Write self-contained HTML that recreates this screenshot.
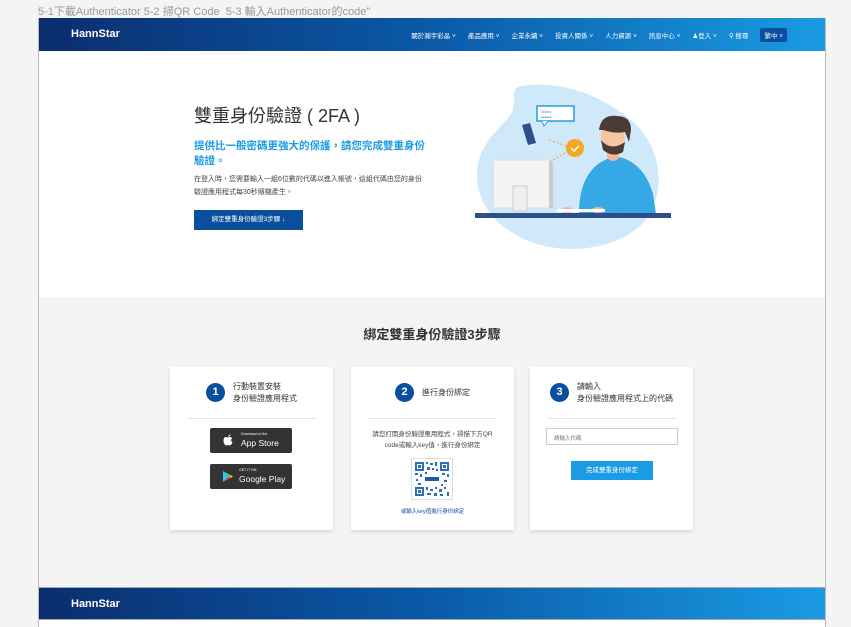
<!DOCTYPE html>
<html><head><meta charset="utf-8"><style>
*{box-sizing:border-box;margin:0;padding:0}
body{width:851px;height:627px;overflow:hidden;background:#f4f4f4;font-family:"Liberation Sans","Noto Sans CJK TC",sans-serif;position:relative}
.cap{position:absolute;left:38px;top:3px;font-size:11px;color:#999}
.frame{position:absolute;left:38px;top:18px;width:788px;height:609px;border-left:1px solid #bbb;border-right:1px solid #bbb;background:#fff}
.hdr{height:33px;background:linear-gradient(90deg,#0b2d6e,#0a5aa8 50%,#1a9be3);position:relative}
.logo{position:absolute;left:32px;top:10px;color:#fff;font-weight:bold;font-size:11px}
.nav{position:absolute;right:38px;top:0;height:33px;display:flex;align-items:center;gap:12px;font-size:6.5px;color:#fff}
.nav .lang{background:#0a4f9e;padding:2px 4px;border-radius:1px}
.hero{position:relative;height:246px;background:#fff}
.h1{position:absolute;left:155px;top:51px;font-size:18px;color:#333}
.sub{position:absolute;left:155px;top:88px;width:232px;font-size:10.5px;line-height:15px;color:#1a9be3;font-weight:bold}
.desc{position:absolute;left:155px;top:122px;width:232px;font-size:7px;line-height:13px;color:#444}
.btn1{position:absolute;left:155px;top:159px;width:109px;height:20px;background:#0a4f9e;color:#fff;font-size:6.5px;text-align:center;line-height:20px}
.gray{position:absolute;left:0;top:279px;width:786px;height:290px;background:#f4f4f4}
.stitle{position:absolute;top:27px;width:100%;text-align:center;font-size:13px;color:#333;font-weight:bold}
.card{position:absolute;top:70px;width:163px;height:163px;background:#fff;box-shadow:0 2px 4px rgba(0,0,0,.12)}
.chead{position:absolute;left:17px;right:17px;top:0;height:52px;border-bottom:1px solid #e6e6e6;display:flex;align-items:center;justify-content:center;gap:8px;font-size:8px;color:#333;line-height:12px;white-space:nowrap}
.num{width:19px;height:19px;border-radius:50%;background:#0a4f9e;color:#fff;font-weight:bold;font-size:11px;text-align:center;line-height:19px;flex:none}
.store{position:absolute;left:40px;width:82px;height:25px;background:#333;border-radius:2px;color:#fff;font-size:8.5px}
.foot{position:absolute;left:0;top:569px;width:786px;height:33px;background:linear-gradient(90deg,#0b2d6e,#0a5aa8 50%,#1a9be3);border-top:1px solid #9ab;border-bottom:1px solid #9ab}
</style></head><body>
<div class="cap">5-1下載Authenticator 5-2 掃QR Code&nbsp; 5-3 輸入Authenticator的code"</div>
<div class="frame">
<div class="hdr"><div class="logo">HannStar</div>
<div class="nav"><span>關於瀚宇彩晶 ˅</span><span>產品應用 ˅</span><span>企業永續 ˅</span><span>投資人關係 ˅</span><span>人力資源 ˅</span><span>訊息中心 ˅</span><span>♟登入 ˅</span><span>⚲ 搜尋</span><span class="lang">繁中 ˅</span></div></div>
<div class="hero">
<div class="h1">雙重身份驗證 ( 2FA )</div>
<div class="sub">提供比一般密碼更強大的保護，請您完成雙重身份驗證。</div>
<div class="desc">在登入時，您需要輸入一組6位數的代碼以進入帳號，這組代碼由您的身份驗證應用程式每30秒隨機產生。</div>
<div class="btn1">綁定雙重身份驗證3步驟 ↓</div>
<svg style="position:absolute;left:422px;top:29px" width="222" height="172" viewBox="460 80 222 172">
<path d="M520 86 C560 80 600 95 630 120 C665 150 665 200 640 225 C610 252 560 255 525 240 C485 222 470 190 478 160 C485 135 505 125 512 110 C515 95 510 88 520 86Z" fill="#cfe9fa"/>
<rect x="536" y="106" width="37" height="15" fill="#fff" stroke="#2a9be0" stroke-width="1.5"/>
<path d="M541 121 l2 5 l4 -5" fill="#fff" stroke="#2a9be0"/>
<text x="540" y="113" font-size="4" fill="#2a9be0">30sec</text>
<text x="540" y="119" font-size="5" fill="#2a9be0">••••••</text>
<path d="M521 125 l8 -2 l6 20 l-8 2z" fill="#2d4f8c"/>
<path d="M548 140 l17 6 M552 160 l14 -8" stroke="#f5a623" stroke-dasharray="2 2"/>
<circle cx="574" cy="148" r="9" fill="#f5a623"/><path d="M570 148 l3 3 l5 -5" stroke="#fff" fill="none" stroke-width="1.5"/>
<path d="M492 160 h56 a4 4 0 0 1 4 4 v44 h-60z" fill="#f4f4f4" stroke="#ddd"/>
<path d="M548 160 a4 4 0 0 1 4 4 v44 h-4z" fill="#ccc"/>
<rect x="512" y="186" width="14" height="25" fill="#f0f0f0" stroke="#ccc"/>
<path d="M578 214 q0 -38 22 -52 l12 -6 l10 2 q22 8 30 36 l3 20z" fill="#35a8e6"/>
<path d="M606 146 l0 12 q6 6 12 0 l0 -12z" fill="#f2b896"/>
<path d="M600 124 q10 -8 22 0 l2 16 q-2 10 -12 12 q-10 -2 -12 -12z" fill="#f6c6a3"/>
<path d="M598 130 q2 -16 18 -14 q14 0 14 14 l-2 12 l-4 -10 q-10 2 -22 -2z" fill="#4a3b36"/>
<path d="M600 140 q10 12 24 2 l-2 10 q-10 6 -20 -2z" fill="#4a3b36"/>
<path d="M590 200 q10 6 30 4 l4 8 h-34z" fill="#35a8e6"/>
<ellipse cx="566" cy="210" rx="6" ry="3" fill="#f2b896"/><ellipse cx="597" cy="210" rx="6" ry="3" fill="#f2b896"/>
<rect x="474" y="213" width="196" height="5" fill="#2d4f8c"/>
<rect x="556" y="209" width="48" height="3" fill="#fff"/>
</svg>
</div>
<div class="gray">
<div class="stitle">綁定雙重身份驗證3步驟</div>
<div class="card" style="left:131px"><div class="chead"><div class="num">1</div><div>行動裝置安裝<br>身份驗證應用程式</div></div>
<div class="store" style="top:61px"><svg style="position:absolute;left:13px;top:6px" width="10" height="12" viewBox="0 0 10 12"><path d="M5 3 C6 1 7 0.5 7.5 0.3 C7.6 1.5 6.8 2.6 5 3Z M5 3.5 C3 2.5 0.5 3 0.5 6.5 C0.5 9 2 11.5 3.2 11.5 C4 11.5 4.2 11 5 11 C5.8 11 6 11.5 6.8 11.5 C8 11.5 9 9.5 9.5 8.3 C8 7.6 7.6 5 9.2 4.2 C8 2.6 6 3 5 3.5Z" fill="#fff"/></svg><span style="position:absolute;left:31px;top:4px;font-size:3.5px">Download on the</span><span style="position:absolute;left:31px;top:10px">App Store</span></div>
<div class="store" style="top:97px"><svg style="position:absolute;left:13px;top:7px" width="10" height="11" viewBox="0 0 10 11"><path d="M0 0 L6 5.5 L0 11Z" fill="#2dc8f0"/><path d="M0 0 L8 4.3 L6 5.5Z" fill="#3bd16f"/><path d="M0 11 L8 6.7 L6 5.5Z" fill="#f0435a"/><path d="M8 4.3 L10 5.5 L8 6.7 L6 5.5Z" fill="#ffd400"/></svg><span style="position:absolute;left:29px;top:4px;font-size:3.5px">GET IT ON</span><span style="position:absolute;left:29px;top:10px">Google Play</span></div></div>
<div class="card" style="left:312px"><div class="chead"><div class="num">2</div><div>進行身份綁定</div></div>
<div style="position:absolute;top:62px;width:100%;text-align:center;font-size:6.5px;line-height:11px;color:#444;padding:0 14px">請您打開身份驗證應用程式，掃描下方QR code或輸入key值，進行身份綁定</div>
<svg style="position:absolute;left:61px;top:92px;outline:1px solid #ddd" width="40" height="40" viewBox="0 0 40 40"><rect width="40" height="40" fill="#fff"/>
<g fill="#2c6fb3"><rect x="3" y="3" width="9" height="9"/><rect x="28" y="3" width="9" height="9"/><rect x="3" y="28" width="9" height="9"/>
<path d="M14 3h2v2h-2zM18 4h3v2h-3zM23 3h2v4h-2zM15 8h3v3h-3zM20 9h2v2h-2zM24 10h2v2h-2zM3 14h3v2h-3zM8 15h2v3h-2zM13 13h2v2h-2zM30 14h3v2h-3zM35 15h2v3h-2zM4 20h2v2h-2zM32 21h3v2h-3zM14 28h2v3h-2zM18 30h3v2h-3zM23 28h2v2h-2zM27 30h3v3h-3zM32 28h2v2h-2zM35 33h2v4h-2zM15 34h4v2h-4zM22 34h3v3h-3zM28 35h3v2h-3zM6 24h3v2h-3zM29 25h2v2h-2z"/></g>
<rect x="5" y="5" width="5" height="5" fill="#fff"/><rect x="30" y="5" width="5" height="5" fill="#fff"/><rect x="5" y="30" width="5" height="5" fill="#fff"/>
<rect x="6" y="6" width="3" height="3" fill="#2c6fb3"/><rect x="31" y="6" width="3" height="3" fill="#2c6fb3"/><rect x="6" y="31" width="3" height="3" fill="#2c6fb3"/>
<rect x="11" y="17" width="18" height="6" fill="#fff"/><rect x="13" y="18" width="14" height="4" fill="#1e5ea8"/></svg>
<div style="position:absolute;top:140px;width:100%;text-align:center;font-size:5.5px;color:#0a4f9e">或輸入key值進行身份綁定</div></div>
<div class="card" style="left:491px"><div class="chead"><div class="num">3</div><div>請輸入<br>身份驗證應用程式上的代碼</div></div>
<div style="position:absolute;left:16px;top:61px;width:132px;height:17px;border:1px solid #ccc;font-size:5.5px;color:#777;padding:5px 7px">請輸入代碼</div>
<div style="position:absolute;left:41px;top:94px;width:82px;height:19px;background:#1a9be3;color:#fff;font-size:6.5px;text-align:center;line-height:19px">完成雙重身份綁定</div></div>
</div>
<div class="foot"><div class="logo" style="top:10px">HannStar</div></div>
</div>
</body></html>
